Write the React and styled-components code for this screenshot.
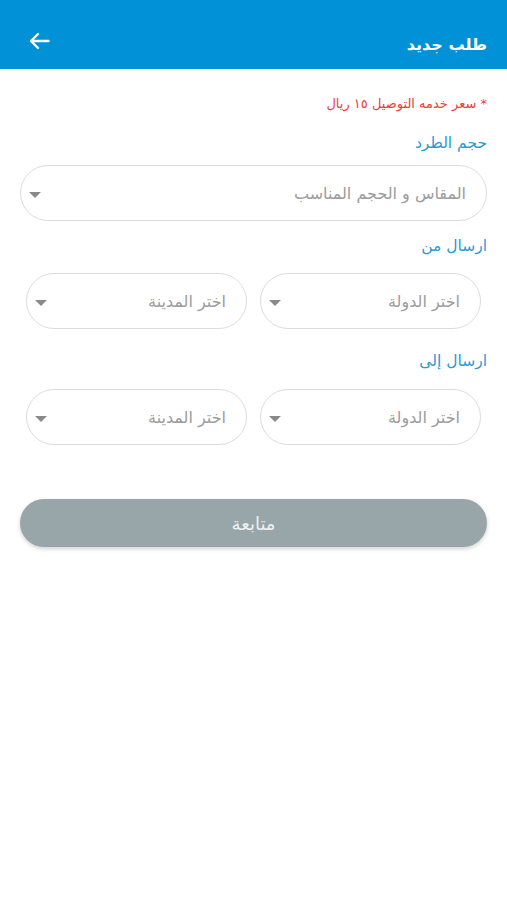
import React from "react";
import styled, { createGlobalStyle } from "styled-components";

const GlobalStyle = createGlobalStyle`
  body {
    margin: 0;
    background: #ffffff;
    font-family: "DejaVu Sans", "Noto Sans", sans-serif;
  }
`;

const Page = styled.div`
  direction: rtl;
  min-height: 900px;
  background: #fff;
`;

const Header = styled.header`
  height: 69px;
  background: #0091d7;
  display: flex;
  align-items: flex-start;
  justify-content: space-between;
  padding: 0 20px 0 29px;
  box-sizing: border-box;
`;

const Title = styled.h1`
  margin: 34px 0 0;
  font-size: 16px;
  line-height: 22px;
  font-weight: bold;
  color: #fff;
`;

const BackButton = styled.button`
  background: none;
  border: 0;
  padding: 0;
  margin-top: 32px;
  display: flex;
  cursor: pointer;
`;

const Content = styled.main`
  padding: 24px 20px 0 20px;
`;

const Notice = styled.p`
  margin: 0;
  font-size: 13px;
  line-height: 22px;
  color: #ef3b3b;
`;

const Label = styled.div`
  margin: ${(p) => p.$top || 16}px 0 ${(p) => p.$bottom || 12}px;
  font-size: 15.5px;
  line-height: 20px;
  color: #2a9ad6;
`;

const Select = styled.div`
  height: 56px;
  flex: 1;
  border: 1.5px solid #dcdcdc;
  border-radius: 28px;
  display: flex;
  align-items: center;
  justify-content: space-between;
  padding: 0 20px 0 8px;
  box-sizing: border-box;
  font-size: 16px;
  color: #9c9c9c;
`;

const Caret = styled.span`
  width: 0;
  height: 0;
  margin-top: 4px;
  border-left: 6px solid transparent;
  border-right: 6px solid transparent;
  border-top: 6px solid #8a8a8a;
`;

const Row = styled.div`
  display: flex;
  gap: 13px;
  padding: 0 6px;
`;

const SubmitButton = styled.button`
  display: block;
  width: 100%;
  height: 48px;
  margin-top: 54px;
  border: 0;
  border-radius: 24px;
  background: #98a5a9;
  color: #edf1f1;
  font-family: inherit;
  font-size: 18px;
  box-shadow: 0 2px 4px rgba(0, 0, 0, 0.18);
`;

const Dropdown = ({ placeholder }) => (
  <Select>
    <span>{placeholder}</span>
    <Caret />
  </Select>
);

const App = () => (
  <Page>
    <GlobalStyle />
    <Header>
      <Title>طلب جديد</Title>
      <BackButton aria-label="رجوع">
        <svg width="21" height="18" viewBox="0 0 21 18" fill="none" stroke="#fff" strokeWidth="2.4" strokeLinecap="round" strokeLinejoin="round">
          <path d="M19.5 9H2M9 2L2 9l7 7" />
        </svg>
      </BackButton>
    </Header>
    <Content>
      <Notice>* سعر خدمه التوصيل ١٥ ريال</Notice>
      <Label $top={18}>حجم الطرد</Label>
      <Dropdown placeholder="المقاس و الحجم المناسب" />
      <Label $top={15} $bottom={17}>ارسال من</Label>
      <Row>
        <Dropdown placeholder="اختر الدولة" />
        <Dropdown placeholder="اختر المدينة" />
      </Row>
      <Label $top={22} $bottom={18}>ارسال إلى</Label>
      <Row>
        <Dropdown placeholder="اختر الدولة" />
        <Dropdown placeholder="اختر المدينة" />
      </Row>
      <SubmitButton>متابعة</SubmitButton>
    </Content>
  </Page>
);

export default App;
